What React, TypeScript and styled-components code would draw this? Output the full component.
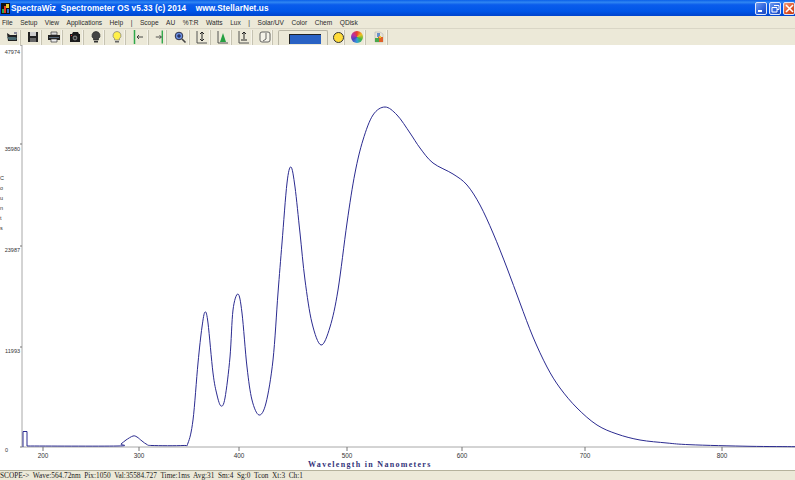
import React from 'react'
import styled, { createGlobalStyle } from 'styled-components'

const GlobalStyle = createGlobalStyle`
  html, body { margin: 0; padding: 0; background: #fff; overflow: hidden; }
`

const Window = styled.div`
  width: 795px;
  height: 480px;
  display: flex;
  flex-direction: column;
  overflow: hidden;
  font-family: "Liberation Sans", Arial, sans-serif;
  background: #ece9d8;
`

const TitleBar = styled.div`
  height: 16px;
  flex: none;
  display: flex;
  align-items: center;
  padding: 0 0 0 1px;
  background: linear-gradient(180deg, #0a5fe8 0%, #2f86f2 14%, #0a5cec 30%, #0056e8 70%, #0044cc 100%);
`

const TitleText = styled.span`
  flex: 1;
  margin-left: 1px;
  color: #fff;
  font-size: 8.2px;
  font-weight: bold;
  white-space: pre;
  letter-spacing: 0.1px;
`

const WinButton = styled.div<{ $close?: boolean }>`
  width: 12px;
  height: 13px;
  margin-right: 2px;
  display: flex;
  align-items: center;
  justify-content: center;
  border: 1px solid #dfe8fa;
  border-radius: 2px;
  box-sizing: border-box;
  background: ${p => (p.$close ? 'linear-gradient(135deg, #f0a080, #e0552a 55%, #c53a12)' : 'linear-gradient(135deg, #6f9bf0, #2c62dc 60%, #1d48b8)')};
  &:last-child { margin-right: 0; }
`

const MenuBar = styled.div`
  height: 13px;
  flex: none;
  display: flex;
  align-items: center;
  gap: 7.5px;
  padding-left: 2px;
  font-size: 6.6px;
  color: #2a2a2a;
  border-bottom: 1px solid #d9d6c6;
  box-sizing: border-box;
`

const Toolbar = styled.div`
  height: 16px;
  flex: none;
  display: flex;
  align-items: center;
`

const Tool = styled.div<{ $w?: number }>`
  width: ${p => p.$w ?? 21}px;
  height: 15px;
  flex: none;
  display: flex;
  align-items: center;
  justify-content: center;
  box-sizing: border-box;
  padding-left: 4px;
  border-right: 1px solid #c6c3b2;
  box-shadow: inset -1px 0 0 #f6f4ea;
`

const Combo = styled.div`
  width: 50px;
  height: 15px;
  margin-left: 5px;
  flex: none;
  box-sizing: border-box;
  border: 1px solid #b8b5a5;
  border-bottom: none;
  border-radius: 2px 2px 0 0;
  display: flex;
  align-items: center;
  padding: 2px 0 0 10px;
`

const ComboBar = styled.div`
  width: 31px;
  height: 9px;
  background: #2a62c4;
  border-left: 1px solid #222;
  border-top: 1px solid #222;
`

const Dot = styled.div`
  width: 9px;
  height: 9px;
  border-radius: 50%;
  background: #ffdc3a;
  border: 1px solid #333;
`

const Wheel = styled.div`
  width: 12px;
  height: 12px;
  border-radius: 50%;
  background: conic-gradient(#e83a30, #f0c020, #40b840, #30a0d8, #5040c0, #c030a0, #e83a30);
`

const Plot = styled.svg`
  flex: 1;
  display: block;
  width: 795px;
  background: #fff;
`

const StatusBar = styled.div`
  height: 10px;
  flex: none;
  display: flex;
  align-items: center;
  box-sizing: border-box;
  border-top: 1px solid #b5b29c;
  font-family: "Liberation Serif", "Times New Roman", serif;
  font-size: 7.3px;
  color: #222;
  white-space: pre;
`

const AxisText = styled.text<{ $small?: boolean }>`
  font-family: "Liberation Sans", Arial, sans-serif;
  font-size: ${p => (p.$small ? 5.5 : 6.4)}px;
  fill: #333;
`

const AxisTitle = styled.text`
  font-family: "Liberation Serif", serif;
  font-size: 8px;
  font-weight: bold;
  fill: #33337a;
  letter-spacing: 1.3px;
`

const menus = ['File', 'Setup', 'View', 'Applications', 'Help', '|', 'Scope', 'AU', '%T:R', 'Watts', 'Lux', '|', 'Solar/UV', 'Color', 'Chem', 'QDisk']

const pts: [number, number][] = [
  [27, 446], [117, 446], [121, 444], [126, 440], [133, 436], [137, 437], [142, 441], [147, 444.5], [152, 445.5], [183, 445.5],
  [188, 443], [193, 420], [198, 363], [202, 327], [205, 312], [208, 323], [213, 373], [217, 395], [221, 406],
  [225, 398], [230, 357], [233, 310], [238, 294], [242, 313], [247, 367], [252, 400], [259, 415], [266, 403],
  [273, 360], [278, 293], [282, 243], [287, 183], [291, 167], [295, 187], [300, 233], [305, 280], [312, 323],
  [321, 345], [330, 327], [338, 290], [347, 223], [355, 173], [363, 140], [373, 115], [385, 107], [397, 115],
  [410, 133], [420, 148], [433, 163], [453, 174], [467, 185], [480, 205], [493, 233], [507, 268], [520, 303],
  [533, 337], [547, 367], [560, 388], [577, 408], [597, 425], [617, 434], [640, 440], [667, 443], [690, 444.7],
  [750, 446.3], [795, 446.7],
]

// catmull-rom through the traced points
function smooth(p: [number, number][]) {
  let d = `M${p[0][0]} ${p[0][1]}`
  for (let i = 0; i < p.length - 1; i++) {
    const a = p[Math.max(i - 1, 0)]
    const b = p[i]
    const c = p[i + 1]
    const e = p[Math.min(i + 2, p.length - 1)]
    const c1x = b[0] + (c[0] - a[0]) / 6
    const c1y = b[1] + (c[1] - a[1]) / 6
    const c2x = c[0] - (e[0] - b[0]) / 6
    const c2y = c[1] - (e[1] - b[1]) / 6
    d += ` C${c1x.toFixed(1)} ${c1y.toFixed(1)} ${c2x.toFixed(1)} ${c2y.toFixed(1)} ${c[0]} ${c[1]}`
  }
  return d
}

const xTicks: [number, string][] = [[43, '200'], [139, '300'], [239, '400'], [347, '500'], [462, '600'], [585, '700'], [722, '800']]
const yTicks: [number, number, string][] = [[45, 54, '47974'], [144, 151, '35980'], [246, 252, '23987'], [347, 353, '11993']]

const Ico = ({ children }: { children: React.ReactNode }) => (
  <svg width="14" height="14" viewBox="0 0 14 14">{children}</svg>
)

const OpenIcon = () => (
  <Ico>
    <path d="M2 3l3 2h6l1-1v7H3z" fill="#222" />
    <path d="M2 7l2 3h7l1-2-2-1z" fill="#4a6a70" />
    <path d="M9 2h3v2H9z" fill="#889" />
  </Ico>
)
const SaveIcon = () => (
  <Ico>
    <path d="M2 2h10v10H2z" fill="#222" />
    <path d="M4 2h6v4H4z" fill="#ccc" />
    <path d="M4 8h6v4H4z" fill="#666" />
  </Ico>
)
const PrintIcon = () => (
  <Ico>
    <path d="M4 2h6v3H4z" fill="#ddd" stroke="#333" strokeWidth=".7" />
    <path d="M1 5h12v5H1z" fill="#222" />
    <path d="M4 9h6v3H4z" fill="#eee" stroke="#333" strokeWidth=".7" />
    <path d="M2 7h10v1H2z" fill="#567" />
  </Ico>
)
const CameraIcon = () => (
  <Ico>
    <path d="M2 4h2l1-2h5l1 2h1v8H2z" fill="#1c1c1c" />
    <circle cx="7" cy="8" r="2.4" fill="#777" />
    <circle cx="7" cy="8" r="1.1" fill="#222" />
    <path d="M3 5h1v1H3z" fill="#d33" />
  </Ico>
)
const BulbIcon = ({ on }: { on?: boolean }) => (
  <Ico>
    <path d="M7 1.5a4 4 0 0 1 2.4 7.2V10H4.600V8.700A4 4 0 0 1 7 1.500z" fill={on ? '#fff04a' : '#444'} stroke={on ? '#777' : '#222'} strokeWidth=".7" />
    <path d="M5 11h4v1.500H5z" fill={on ? '#666' : '#333'} />
  </Ico>
)
const MarkIcon = ({ right }: { right?: boolean }) => (
  <Ico>
    <path d={right ? 'M10 0v14' : 'M2.500 0v14'} stroke="#2fa84a" strokeWidth="1.500" />
    <path d={right ? 'M3 7h6M7 5l2 2-2 2' : 'M5 7h6M7 5L5 7l2 2'} stroke="#333" strokeWidth=".9" fill="none" />
  </Ico>
)
const ZoomIcon = () => (
  <Ico>
    <circle cx="6" cy="6" r="3.800" fill="#6a8fe0" stroke="#334" strokeWidth="1" />
    <path d="M6 4v4M4 6h4" stroke="#113" strokeWidth=".9" />
    <path d="M9 9l3.500 3.500" stroke="#444" strokeWidth="1.600" />
  </Ico>
)
const ScaleIcon = () => (
  <Ico>
    <path d="M2 1v12h10" stroke="#444" strokeWidth=".9" fill="none" />
    <path d="M7 2v9M5 4l2-2 2 2M5 9l2 2 2-2" stroke="#222" strokeWidth="1" fill="none" />
  </Ico>
)
const PeakIcon = () => (
  <Ico>
    <path d="M2 1v12h10" stroke="#444" strokeWidth=".9" fill="none" />
    <path d="M4 12l3-9 3 9z" fill="#26a040" />
  </Ico>
)
const UpIcon = () => (
  <Ico>
    <path d="M2 1v12h10" stroke="#444" strokeWidth=".9" fill="none" />
    <path d="M7 9V2M5 4l2-2 2 2M4 10h6" stroke="#222" strokeWidth="1" fill="none" />
  </Ico>
)
const PageIcon = () => (
  <Ico>
    <rect x="2" y="2" width="10" height="10" rx="2" fill="#f4f2e8" stroke="#555" strokeWidth=".9" />
    <path d="M8 3v6l-3 2" stroke="#555" strokeWidth=".9" fill="none" />
  </Ico>
)
const FlaskIcon = () => (
  <Ico>
    <path d="M3 2h5l3 2v8H3z" fill="#e8e4d8" stroke="#aaa" strokeWidth=".5" />
    <path d="M6 7h5v5H6z" fill="#e0622a" />
    <path d="M3 8h4v4H3z" fill="#4aa84a" />
    <path d="M5 3h3v4H5z" fill="#6a90c8" />
    <path d="M7 6h2v2H7z" fill="#f0c830" />
  </Ico>
)

const AppLogo = () => (
  <svg width="9" height="11" viewBox="0 0 9 11">
    <path d="M0 0h9v11H0z" fill="#111" />
    <path d="M1 6h2v4H1z" fill="#2fa84a" />
    <path d="M3 3h2v7H3z" fill="#e03a20" />
    <path d="M5 1h3v4H5z" fill="#e8d030" />
    <path d="M6 6h2v4H6z" fill="#2a6ad0" />
  </svg>
)

export default function App() {
  return (
    <Window>
      <GlobalStyle />
      <TitleBar>
        <AppLogo />
        <TitleText>{'SpectraWiz  Spectrometer OS v5.33 (c) 2014    www.StellarNet.us'}</TitleText>
        <WinButton>
          <svg width="8" height="9" viewBox="0 0 8 9"><path d="M1 6h4v2H1z" fill="#fff" /></svg>
        </WinButton>
        <WinButton>
          <svg width="9" height="9" viewBox="0 0 9 9"><path d="M3 1.500h5v4H6M1 3.500h5v4.500H1z" fill="none" stroke="#fff" /></svg>
        </WinButton>
        <WinButton $close>
          <svg width="9" height="9" viewBox="0 0 9 9"><path d="M1 1l7 7M8 1L1 8" stroke="#fff" strokeWidth="1.600" /></svg>
        </WinButton>
      </TitleBar>

      <MenuBar>
        {menus.map((m, i) => <span key={i}>{m}</span>)}
      </MenuBar>

      <Toolbar>
        <Tool><OpenIcon /></Tool>
        <Tool><SaveIcon /></Tool>
        <Tool><PrintIcon /></Tool>
        <Tool><CameraIcon /></Tool>
        <Tool><BulbIcon /></Tool>
        <Tool><BulbIcon on /></Tool>
        <Tool $w={23}><MarkIcon /></Tool>
        <Tool $w={18}><MarkIcon right /></Tool>
        <Tool $w={23}><ZoomIcon /></Tool>
        <Tool><ScaleIcon /></Tool>
        <Tool><PeakIcon /></Tool>
        <Tool><UpIcon /></Tool>
        <Tool $w={20}><PageIcon /></Tool>
        <Combo><ComboBar /></Combo>
        <Tool $w={17}><Dot /></Tool>
        <Tool><Wheel /></Tool>
        <Tool $w={22}><FlaskIcon /></Tool>
      </Toolbar>

      <Plot viewBox="0 45 795 425" height="425">
        <path d="M22 44V447H795" fill="none" stroke="#a8a8a8" strokeWidth="1" />
        {xTicks.map(([x, t]) => (
          <g key={t}>
            <path d={`M${x} 447v4`} stroke="#777" />
            <AxisText x={x} y={458} textAnchor="middle">{t}</AxisText>
          </g>
        ))}
        {yTicks.map(([tick, base, t]) => (
          <g key={t}>
            <path d={`M20 ${tick}h2`} stroke="#777" />
            <AxisText $small x={20} y={base} textAnchor="end">{t}</AxisText>
          </g>
        ))}
        <AxisText $small x={5} y={452}>0</AxisText>
        <path d="M20 447h2" stroke="#777" />
        {['C', 'o', 'u', 'n', 't', 's'].map((c, i) => (
          <AxisText $small key={i} x={0} y={180 + i * 10}>{c}</AxisText>
        ))}
        <path d="M23 447V431.500H27V446" fill="none" stroke="#2b2b90" />
        <path d={smooth(pts)} fill="none" stroke="#2b2b90" strokeWidth="1" />
        <AxisTitle x={308} y={467}>Wavelength in Nanometers</AxisTitle>
      </Plot>

      <StatusBar>{'SCOPE->  Wave:564.72nm  Pix:1050  Val:35584.727  Time:1ms  Avg:31  Sm:4  Sg:0  Tcon  Xt:3  Ch:1'}</StatusBar>
    </Window>
  )
}
